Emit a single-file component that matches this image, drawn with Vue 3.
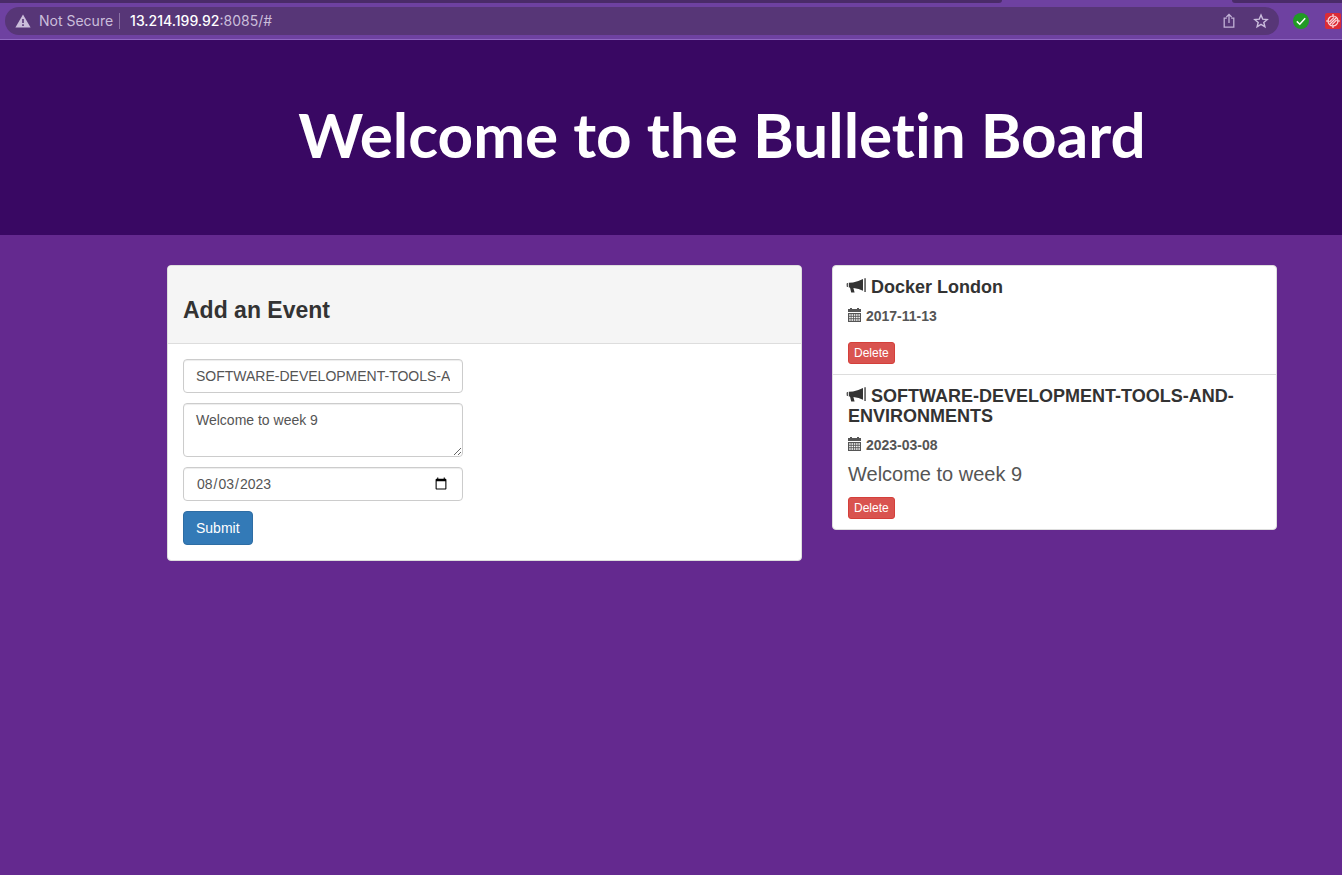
<script setup>
import { ref } from 'vue'

const title = ref('SOFTWARE-DEVELOPMENT-TOOLS-AND-ENVIRONMENTS')
const detail = ref('Welcome to week 9')
const date = ref('2023-08-03')

const events = ref([
  { id: 1, title: 'Docker London', date: '2017-11-13', detail: '' },
  {
    id: 2,
    title: 'SOFTWARE-DEVELOPMENT-TOOLS-AND-ENVIRONMENTS',
    date: '2023-03-08',
    detail: 'Welcome to week 9',
  },
])

function addEvent() {
  if (!title.value) return
  events.value.push({
    id: Date.now(),
    title: title.value,
    date: date.value,
    detail: detail.value,
  })
}

function removeEvent(id) {
  events.value = events.value.filter((e) => e.id !== id)
}
</script>

<template>
  <div class="page">
    <div class="chrome">
      <div class="tabs">
        <span class="tab-left"></span>
        <span class="tab-right"></span>
      </div>
      <div class="toolbar">
        <div class="address">
          <svg class="warn" width="16" height="14" viewBox="0 0 16 14" aria-hidden="true">
            <path d="M8 0.5 L15.6 13.5 H0.4 Z" fill="#cbbedb" />
            <path d="M8 5 V9 M8 10.3 V12" stroke="#573677" stroke-width="1.6" />
          </svg>
          <span class="insecure">Not Secure</span>
          <span class="bar"></span>
          <span class="url"><b>13.214.199.92</b>:8085/#</span>
          <button class="tool share" type="button" aria-label="Share">
            <svg width="14" height="16" viewBox="0 0 14 16" fill="none" stroke="#c2b1d6" stroke-width="1.3">
              <path d="M4.8 5.2 H2.2 V14.2 H11.8 V5.2 H9.2 M7 10 V1.6 M4.4 4 L7 1.4 L9.6 4" />
            </svg>
          </button>
          <button class="tool" type="button" aria-label="Bookmark">
            <svg width="16" height="16" viewBox="0 0 16 16" fill="none" stroke="#cbbddd" stroke-width="1.4">
              <path d="M8 2 L9.7 6.1 L14.2 6.5 L10.8 9.4 L11.9 13.8 L8 11.4 L4.1 13.8 L5.2 9.4 L1.8 6.5 L6.3 6.1 Z" />
            </svg>
          </button>
        </div>
        <svg width="16" height="16" viewBox="0 0 16 16" aria-hidden="true">
          <circle cx="8" cy="8" r="8" fill="#219a25" />
          <path d="M3.8 8.4 L6.8 11.2 L12.2 5.2" fill="none" stroke="#fff" stroke-width="1.5" />
        </svg>
        <svg width="16" height="16" viewBox="0 0 16 16" aria-hidden="true">
          <rect width="16" height="16" rx="2" fill="#dc2c35" />
          <g fill="none" stroke="#fbd9dc" stroke-width="1.2">
            <circle cx="8" cy="8" r="5" />
            <path d="M8 1 V4 M8 12 V15 M1 8 H4 M12 8 H15 M4.4 9 L9 4.4 M5 11 L11 5 M7 11.6 L11.6 7" />
          </g>
        </svg>
      </div>
    </div>

    <header class="hero">
      <h1>Welcome to the Bulletin Board</h1>
    </header>

    <main class="container">
      <section class="column">
        <div class="panel">
          <div class="panel-heading">
            <h3>Add an Event</h3>
          </div>
          <form class="panel-body" @submit.prevent="addEvent">
            <input v-model="title" class="control" type="text" aria-label="Title" />
            <textarea v-model="detail" class="control area" aria-label="Detail"></textarea>
            <input v-model="date" class="control date" type="date" aria-label="Date" />
            <button class="submit" type="submit">Submit</button>
          </form>
        </div>
      </section>

      <section class="column">
        <div class="panel">
          <article v-for="event in events" :key="event.id" class="event">
            <h4>
              <svg class="horn" width="20" height="16" viewBox="0 0 20 16" fill="currentColor" aria-hidden="true">
                <path d="M0.9 5 H1.8 V9 H0.9 Q0.3 7 0.9 5 Z" />
                <path d="M2.8 4.8 L7 4.4 Q12 3.6 17 1 V12.8 Q13 10.8 7.4 10 L8.6 14.6 H5.2 L4 9.6 L2.8 9.4 Z" />
                <path d="M18.4 0.2 H19.7 V14 H18.4 Z" />
              </svg>
              {{ event.title }}
            </h4>
            <h5>
              <svg class="calendar" width="13" height="14" viewBox="0 0 13 14" aria-hidden="true">
                <path d="M0 1 H2 V0 H4 V1 H9 V0 H11 V1 H13 V4 H0 Z M0 5 H13 V14 H0 Z" fill="currentColor" />
                <path d="M1.2 7 H12 M1.2 9.5 H12 M1.2 12 H12" stroke="#fff" stroke-width="1.3" stroke-dasharray="1.5 0.8" />
              </svg>
              {{ event.date }}
            </h5>
            <p>{{ event.detail }}</p>
            <button class="delete" type="button" @click="removeEvent(event.id)">Delete</button>
          </article>
        </div>
      </section>
    </main>
  </div>
</template>

<style>
html,
body {
  background: #64298f;
}
body {
  margin: 0;
}
</style>

<style scoped>
.page,
.page * {
  box-sizing: border-box;
}
.page {
  min-height: 100vh;
  background: #64298f;
  color: #333;
  font: 14px/20px "Liberation Sans", Arial, sans-serif;
}
.chrome {
  background: #6e41a1;
  border-bottom: 1px solid #9068c2;
}
.tabs {
  display: flex;
  justify-content: space-between;
  height: 3px;
}
.tab-left,
.tab-right {
  background: #4a2b69;
}
.tab-left {
  width: 1002px;
  border-bottom-right-radius: 3px;
}
.tab-right {
  width: 110px;
  border-bottom-left-radius: 3px;
}
.toolbar {
  display: flex;
  align-items: center;
  gap: 16px;
  padding: 4px 1px 4px 5px;
  font: 14px/20px Inter, sans-serif;
}
.toolbar > svg {
  flex: none;
}
.toolbar > svg:first-of-type {
  margin-left: -2px;
}
.address {
  flex: 1;
  display: flex;
  align-items: center;
  height: 28px;
  padding: 0 10px;
  border-radius: 14px;
  background: #573677;
  color: #cbbedb;
}
.warn {
  margin-right: 8px;
}
.bar {
  width: 1px;
  height: 16px;
  margin: 0 10px 0 6px;
  background: #8a70a5;
}
.url {
  flex: 1;
}
.url b {
  font-weight: 500;
  color: #fff;
}
.tool {
  display: flex;
  padding: 0;
  border: 0;
  background: none;
}
.share {
  margin-right: 17px;
}
.hero {
  padding: 57px 50px 63px 152px;
  background: #390863;
  text-align: center;
}
.hero h1 {
  margin: 0;
  color: #fff;
  font: 700 62px/75px Lato, sans-serif;
  font-variant-ligatures: none;
}
.container {
  display: grid;
  grid-template-columns: 7fr 5fr;
  align-items: start;
  padding: 30px 50px 30px 152px;
}
.column {
  min-width: 0;
  padding: 0 15px;
}
.panel {
  border: 1px solid #ddd;
  border-radius: 4px;
  background: #fff;
  overflow: hidden;
}
.panel-heading {
  padding: 31px 15px 19px;
  border-bottom: 1px solid #ddd;
  background: #f5f5f5;
}
.panel-heading h3 {
  margin: 0;
  font-size: 23px;
  line-height: 27px;
}
.panel-body {
  display: flex;
  flex-direction: column;
  align-items: flex-start;
  gap: 10px;
  padding: 15px;
}
.control {
  width: 280px;
  max-width: 100%;
  height: 34px;
  margin: 0;
  padding: 6px 12px;
  border: 1px solid #ccc;
  border-radius: 4px;
  background: #fff;
  color: #555;
  font: inherit;
  box-shadow: inset 0 1px 1px rgba(0, 0, 0, 0.075);
}
.area {
  height: 54px;
}
.submit {
  height: 34px;
  padding: 6px 12px;
  border: 1px solid #2e6da4;
  border-radius: 4px;
  background: #337ab7;
  color: #fff;
  font: inherit;
}
.event {
  display: flex;
  flex-direction: column;
  align-items: flex-start;
  padding: 11px 15px 10px;
}
.event + .event {
  border-top: 1px solid #ddd;
}
.event h4 {
  margin: 0 0 11px;
  font-size: 18px;
  line-height: 20px;
}
.horn {
  margin: 0 0 0 -2px;
  vertical-align: -1px;
}
.event h5 {
  margin: 0 0 8px;
  color: #555;
  font-size: 14px;
  line-height: 16px;
}
.calendar {
  margin-right: 1px;
  vertical-align: -1px;
}
.event p {
  margin: 0 0 10px;
  color: #555;
  font-size: 20px;
  line-height: 26px;
}
.delete {
  height: 22px;
  padding: 1px 5px;
  border: 1px solid #d43f3a;
  border-radius: 3px;
  background: #d9534f;
  color: #fff;
  font: 12px/18px "Liberation Sans", Arial, sans-serif;
}
</style>
